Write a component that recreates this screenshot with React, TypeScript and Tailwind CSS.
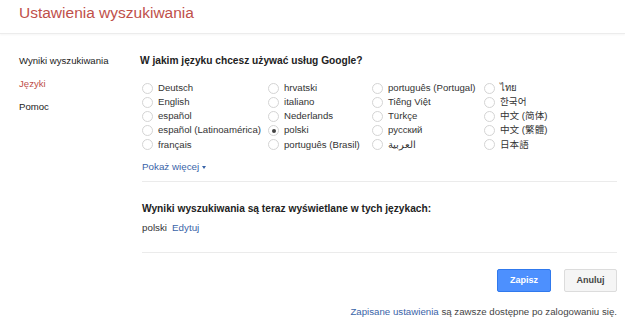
import React from "react";

interface Lang {
   label: string;
   checked?: boolean;
}

const columns: { width: string; items: Lang[] }[] = [
   {
      width: "w-[126px]",
      items: [
         { label: "Deutsch" },
         { label: "English" },
         { label: "español" },
         { label: "español (Latinoamérica)" },
         { label: "français" },
      ],
   },
   {
      width: "w-[104px]",
      items: [
         { label: "hrvatski" },
         { label: "italiano" },
         { label: "Nederlands" },
         { label: "polski", checked: true },
         { label: "português (Brasil)" },
      ],
   },
   {
      width: "w-[112px]",
      items: [
         { label: "português (Portugal)" },
         { label: "Tiếng Việt" },
         { label: "Türkçe" },
         { label: "русский" },
         { label: "العربية" },
      ],
   },
   {
      width: "w-[100px]",
      items: [
         { label: "ไทย" },
         { label: "한국어" },
         { label: "中文 (简体)" },
         { label: "中文 (繁體)" },
         { label: "日本語" },
      ],
   },
];

const Radio = ({ checked }: { checked?: boolean }) => (
   <span className="flex items-center justify-center w-[11px] h-[11px] rounded-full border border-[#d4d4d4] bg-white shrink-0">
      {checked && <span className="w-[4px] h-[4px] rounded-full bg-[#444]" />}
   </span>
);

const App = () => {
   return (
      <div className="w-[625px] h-[326px] bg-white text-[#222] font-['Liberation_Sans','Noto_Sans_CJK_SC',sans-serif] overflow-hidden">
         <div className="h-[34px] border-b border-[#ececec] shadow-[0_1px_2px_rgba(0,0,0,0.04)] pl-[19px] pt-[3px]">
            <h1 className="text-[15.5px] leading-[20px] text-[#c0504a]">Ustawienia wyszukiwania</h1>
         </div>

         <div className="flex">
            {/* left nav */}
            <nav className="w-[140px] pl-[19px] pt-[21px] text-[9.6px] leading-[12px] flex flex-col gap-[11px]">
               <a className="text-[#222]">Wyniki wyszukiwania</a>
               <a className="text-[#c0504a]">Języki</a>
               <a className="text-[#222]">Pomoc</a>
            </nav>

            <main className="w-[477px] pt-[21px]">
               <h2 className="text-[10.2px] leading-[12px] font-bold text-[#222]">
                  W jakim języku chcesz używać usług Google?
               </h2>

               <div className="flex mt-[14px] pl-[2px] text-[9.6px]">
                  {columns.map((col, ci) => (
                     <div key={ci} className={`flex flex-col shrink-0 ${col.width}`}>
                        {col.items.map((lang) => (
                           <label key={lang.label} className="flex items-center gap-[5px] h-[14.2px] text-[#333] whitespace-nowrap">
                              <Radio checked={lang.checked} />
                              <span>{lang.label}</span>
                           </label>
                        ))}
                     </div>
                  ))}
               </div>

               <div className="mt-[8px] pl-[2px] text-[9.8px] leading-[14px] text-[#3a64a8] flex items-center gap-[3px]">
                  <span>Pokaż więcej</span>
                  <span className="inline-block w-0 h-0 border-l-[2.5px] border-r-[2.5px] border-t-[3px] border-l-transparent border-r-transparent border-t-[#3a64a8] mt-[1px]" />
               </div>

               <div className="mt-[7px] ml-[2px] border-t border-[#ebebeb]" />

               <h2 className="mt-[21px] pl-[2px] text-[10.2px] leading-[12px] font-bold text-[#222]">
                  Wyniki wyszukiwania są teraz wyświetlane w tych językach:
               </h2>
               <div className="mt-[6px] pl-[2px] text-[9.8px] leading-[14px] flex gap-[5px]">
                  <span className="text-[#333]">polski</span>
                  <a className="text-[#3a64a8]">Edytuj</a>
               </div>

               <div className="mt-[17px] ml-[2px] border-t border-[#ebebeb]" />

               <div className="flex justify-end gap-[13px] mt-[16px]">
                  <button className="w-[54px] h-[23px] rounded-[2px] bg-[#4d90fe] border border-[#3079ed] text-white text-[9px] font-bold">
                     Zapisz
                  </button>
                  <button className="w-[53px] h-[23px] rounded-[2px] bg-[#f5f5f5] border border-[#dcdcdc] text-[#444] text-[9px] font-bold">
                     Anuluj
                  </button>
               </div>

               <p className="mt-[13px] text-right text-[9.7px] leading-[14px] text-[#444]">
                  <a className="text-[#3a64a8]">Zapisane ustawienia</a> są zawsze dostępne po zalogowaniu się.
               </p>
            </main>
         </div>
      </div>
   );
};

export default App;
